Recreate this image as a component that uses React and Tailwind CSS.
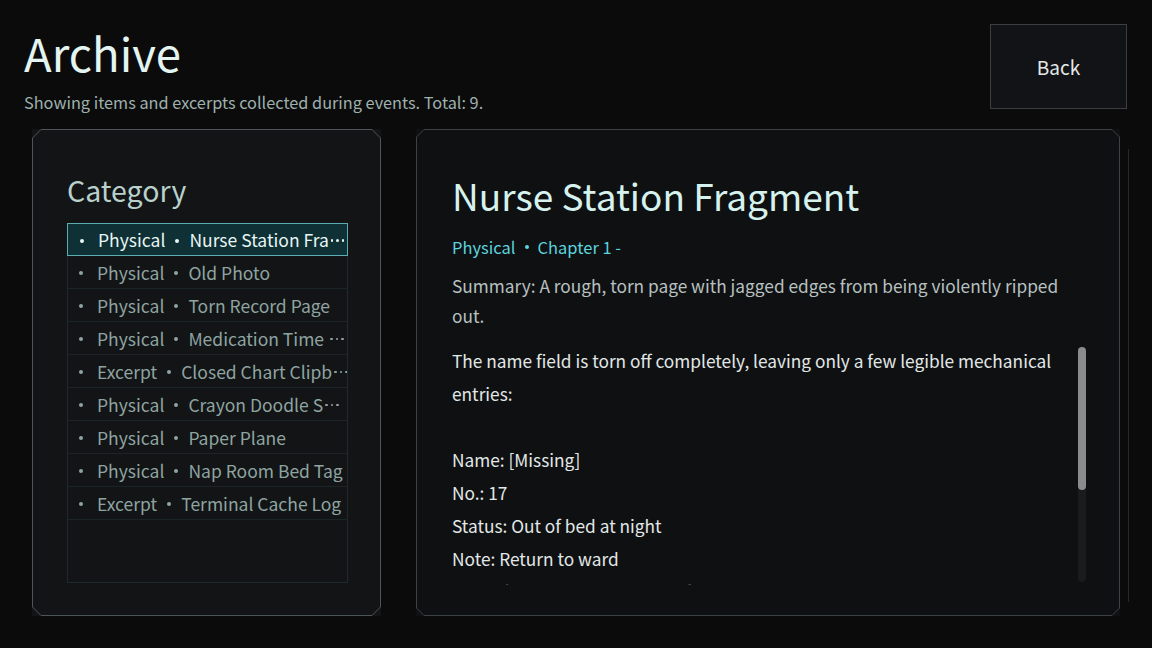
import React from "react";

const items = [
  ["Physical", "Nurse Station Fra", 2],
  ["Physical", "Old Photo", 0],
  ["Physical", "Torn Record Page", 0],
  ["Physical", "Medication Time", 6],
  ["Excerpt", "Closed Chart Clipb", 2],
  ["Physical", "Crayon Doodle S", 2],
  ["Physical", "Paper Plane", 0],
  ["Physical", "Nap Room Bed Tag", 0],
  ["Excerpt", "Terminal Cache Log", 0],
];

function Frame({ w, h, c = 10, stroke = "#4a5254" }) {
  const pts = `${c},0.5 ${w - c},0.5 ${w - 0.5},${c} ${w - 0.5},${h - c} ${w - c},${h - 0.5} ${c},${h - 0.5} 0.5,${h - c} 0.5,${c}`;
  return (
    <svg
      className="absolute inset-0 pointer-events-none"
      width={w}
      height={h}
      viewBox={`0 0 ${w} ${h}`}
    >
      <polygon points={pts} fill="none" stroke={stroke} strokeWidth="1" />
    </svg>
  );
}

function Dot() {
  return <span className="inline-block w-[4px] h-[4px] rounded-full bg-current shrink-0"></span>;
}

function Ellipsis({ wide }) {
  return (
    <span className={wide ? "inline-flex items-center gap-[3px] ml-[6px] shrink-0" : "inline-flex items-center gap-[3px] ml-[2px] shrink-0"}>
      <span className="w-[2.5px] h-[2.5px] rounded-full bg-current"></span>
      <span className="w-[2.5px] h-[2.5px] rounded-full bg-current"></span>
      <span className="w-[2.5px] h-[2.5px] rounded-full bg-current"></span>
    </span>
  );
}

export default function App() {
  const font = { fontFamily: '"Noto Sans CJK SC", "Noto Sans", sans-serif' };
  return (
    <div
      className="w-[1152px] h-[648px] bg-[#0b0b0b] overflow-hidden flex flex-col"
      style={font}
    >
      <div className="flex justify-between pl-[24px] pr-[25px] pt-[24px] h-[129px]">
        <div className="flex flex-col">
          <div className="text-[45.5px] leading-[60px] text-[#e3f4f1] mt-[-2px]">Archive</div>
          <div className="text-[16.3px] leading-[24px] text-[#9fb1ae] mt-[8px]">
            Showing items and excerpts collected during events. Total: 9.
          </div>
        </div>
        <div className="w-[137px] h-[85px] border border-[#3b3f42] bg-[#111316] flex items-center justify-center text-[19px] text-[#e4e8e8] pt-[2px]">
          Back
        </div>
      </div>

      <div className="flex pl-[32px] gap-[35px]">
        <div className="relative w-[349px] h-[487px] bg-[#121416] shrink-0">
          <Frame w={349} h={487} c={9} stroke="#4c5658" />
          <div className="relative pt-[43px] pl-[35px] pr-[33px]">
            <div className="text-[28.5px] leading-[36px] text-[#b9d0cc]">Category</div>
            <div className="mt-[15px] h-[360px] border border-[#1f2a2b] flex flex-col">
              {items.map(([cat, name, trunc], i) => {
                const sel = i === 0;
                return (
                  <div
                    key={i}
                    className={
                      sel
                        ? "h-[33px] shrink-0 flex items-center bg-[#0f3034] border border-[#5cadb1] mx-[-1px] mt-[-1px] text-[#e8f6f4] text-[17.5px] pl-[12px] pt-[2px] whitespace-nowrap overflow-hidden"
                        : "h-[33px] shrink-0 flex items-center border-b border-[#1c2526] text-[#8fa4a1] text-[17.5px] pl-[11px] pt-[2px] whitespace-nowrap overflow-hidden"
                    }
                  >
                    <Dot />
                    <span className="ml-[14px]">{cat}</span>
                    <span className="mx-[10px] flex items-center"><Dot /></span>
                    <span>{name}</span>
                    {trunc > 0 && <Ellipsis wide={trunc > 2} />}
                  </div>
                );
              })}
            </div>
          </div>
        </div>

        <div className="relative w-[704px] h-[487px] bg-[#0f1012] shrink-0">
          <Frame w={704} h={487} c={8} stroke="#3a4244" />
          <div className="absolute right-[-9px] top-[20px] bottom-[14px] w-px bg-[#24292b]"></div>
          <div className="relative pt-[40px] pl-[36px] pr-[34px] flex flex-col">
            <div className="text-[37px] leading-[52px] text-[#d6f2ee]">Nurse Station Fragment</div>
            <div className="mt-[15px] text-[16.5px] leading-[22px] text-[#5dd3df] flex items-center">
              <span>Physical</span>
              <span className="mx-[9px] flex items-center"><Dot /></span>
              <span>Chapter 1 -</span>
            </div>
            <div className="mt-[13px] text-[17.3px] leading-[30px] text-[#b7c1c0]">
              Summary: A rough, torn page with jagged edges from being violently ripped out.
            </div>
            <div className="mt-[13px] flex h-[241px]">
              <div className="flex-1 overflow-hidden text-[17.3px] leading-[33px] text-[#e2e8e7]">
                <div>The name field is torn off completely, leaving only a few legible mechanical entries:</div>
                <div className="h-[33px]"></div>
                <div>Name: [Missing]</div>
                <div>No.: 17</div>
                <div>Status: Out of bed at night</div>
                <div>Note: Return to ward</div>
                <div>Remark: Recalled at night shift</div>
              </div>
              <div className="w-[8px] ml-[8px] mt-[3px] h-[235px] rounded-full bg-[#1a1b1d] relative">
                <div className="w-[8px] h-[143px] rounded-full bg-[#8a8b8c]"></div>
              </div>
            </div>
          </div>
        </div>
      </div>
    </div>
  );
}
